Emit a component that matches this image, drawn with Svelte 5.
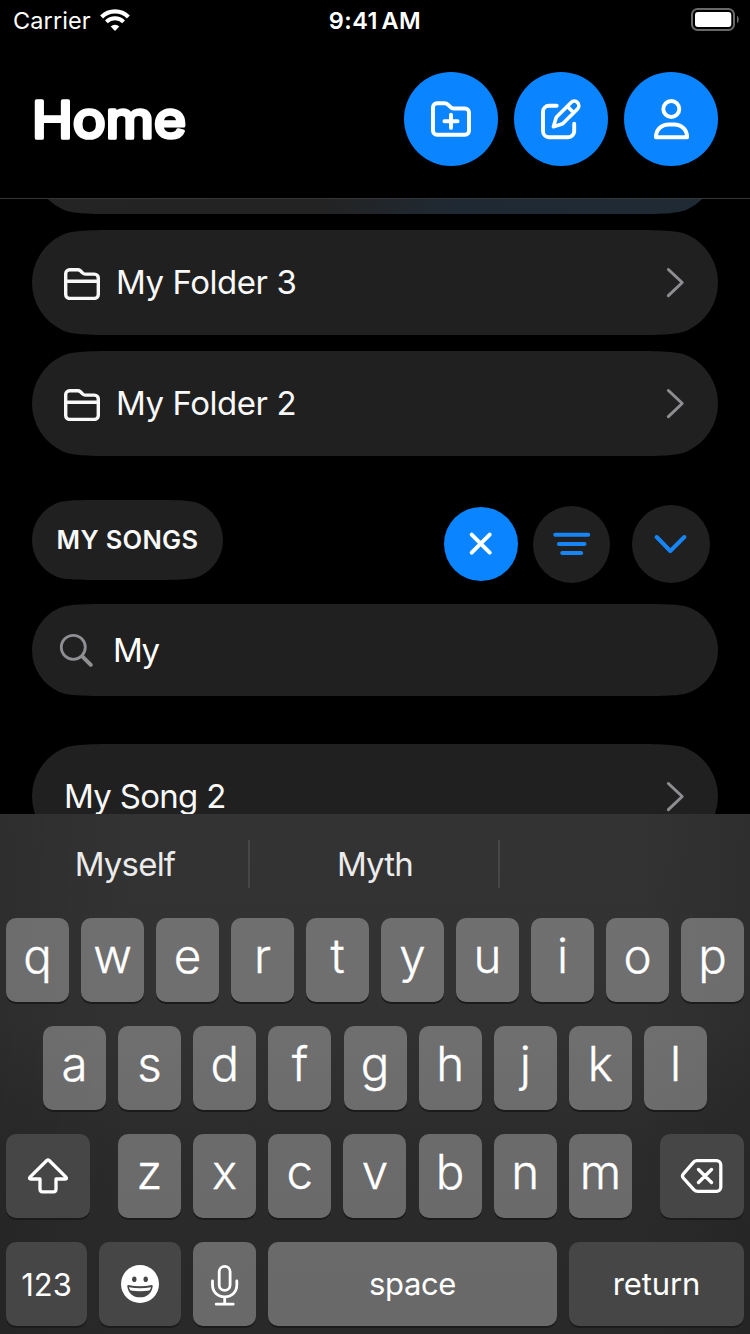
<script>
  const folders = ['My Folder 3', 'My Folder 2'];
  const rowOne = [...'qwertyuiop'];
  const rowTwo = [...'asdfghjkl'];
  const rowThree = [...'zxcvbnm'];

  // Pill outline with continuous corners that ease into the straight edges.
  function pill(w, h) {
    const r = h / 2;
    const k = r / 52.5;
    const x = (v) => +(v * k).toFixed(2);
    const mx = (v) => +(w - v * k).toFixed(2);
    const my = (v) => +(h - v * k).toFixed(2);
    return (
      `path("M0 ${r} A${r} ${r} 0 0 1 ${x(30)} ${x(5.1)} C${x(37)} ${x(1.6)} ${x(48)} 0 ${x(80)} 0 ` +
      `H${mx(80)} C${mx(48)} 0 ${mx(37)} ${x(1.6)} ${mx(30)} ${x(5.1)} A${r} ${r} 0 0 1 ${w} ${r} ` +
      `A${r} ${r} 0 0 1 ${mx(30)} ${my(5.1)} C${mx(37)} ${my(1.6)} ${mx(48)} ${h} ${mx(80)} ${h} ` +
      `H${x(80)} C${x(48)} ${h} ${x(37)} ${my(1.6)} ${x(30)} ${my(5.1)} A${r} ${r} 0 0 1 0 ${r} Z")`
    );
  }
</script>

{#snippet chevron()}
  <svg class="chevron" width="20" height="32" viewBox="0 0 20 32"><path d="M2.4 2.500 16.200 15.500 2.400 28.700" /></svg>
{/snippet}

{#snippet key(letter)}
  <div class="key letter"><span>{letter}</span></div>
{/snippet}

<div class="screen">
  <div class="status">
    <div class="carrier">
      <span>Carrier</span>
      <svg width="30" height="23" viewBox="0 0 30 23" fill="none" stroke="#fff">
        <path d="M1.6 7.9a19 19 0 0 1 26.8 0" stroke-width="4.2" />
        <path d="M6.4 12.8a12.2 12.2 0 0 1 17.2 0" stroke-width="4" />
        <path d="M15 22l-4.3-4.4a6.2 6.2 0 0 1 8.6 0z" fill="#fff" stroke="none" />
      </svg>
    </div>
    <div class="time">9:41 AM</div>
    <svg class="battery" width="49" height="24" viewBox="0 0 49 24">
      <rect x="2" y="1" width="42" height="21" rx="5.5" fill="none" stroke="#69696b" stroke-width="2" />
      <rect x="5" y="4" width="36.3" height="15" rx="3" fill="#fff" />
      <path d="M47 7.7c2.3 1 2.3 6.4 0 7.4z" fill="#69696b" />
    </svg>
  </div>

  <header>
    <svg class="title" width="170" height="80" viewBox="0 0 170 80"><text x="0" y="55.800" textLength="154" lengthAdjust="spacingAndGlyphs">Home</text></svg>
    <div class="actions">
      <div class="round">
        <svg viewBox="0 0 94 94">
          <path d="M29 35.2a4 4 0 0 1 4-4h7.5q2 0 3.4 1.4l2.7 2.6q1.3 1.3 3 1.3H61a4 4 0 0 1 4 4v18.3a4 4 0 0 1-4 4H33a4 4 0 0 1-4-4zM47 42.7v13.2M40.4 49.3h13.2" />
        </svg>
      </div>
      <div class="round">
        <svg viewBox="0 0 94 94">
          <path d="M42.7 33.8H35a6 6 0 0 0-6 6v19.4a6 6 0 0 0 6 6h19.2a6 6 0 0 0 6-6v-7.4" />
          <path d="M57.1 30.500a4.500 4.500 0 0 1 6.400 6.400L48.700 51.700l-9.300 3L42.300 45.300zM53.300 34.300l6.400 6.400" stroke-width="3.600" />
        </svg>
      </div>
      <div class="round">
        <svg viewBox="0 0 94 94">
          <circle cx="47.3" cy="37" r="8" />
          <path d="M31.900 65.200C31.900 57.500 37.500 52.500 45 52.500h5C57.500 52.500 63.100 57.500 63.100 65.200z" />
        </svg>
      </div>
    </div>
  </header>

  <main>
    <div class="row tinted" style:clip-path={pill(686, 105)}></div>
    {#each folders as name}
      <div class="row" style:clip-path={pill(686, 105)}>
        <svg class="folder" width="36" height="32" viewBox="0 0 36 32">
          <path d="M1.7 5.7a4 4 0 0 1 4-4h8q1.6 0 2.7 1l2.4 2.4q1 1 2.6 1h8.9a4 4 0 0 1 4 4v16.3a4 4 0 0 1-4 4H5.7a4 4 0 0 1-4-4zM1.7 13.3h32.6" />
        </svg>
        <span class="name">{name}</span>
        {@render chevron()}
      </div>
    {/each}

    <div class="section">
      <div class="tag" style:clip-path={pill(191, 80)}><span>MY SONGS</span></div>
      <div class="tools">
        <div class="tool close">
          <svg width="26" height="26" viewBox="0 0 26 26"><path d="M3.700 3.700l18 18M21.700 3.700L3.700 21.700" /></svg>
        </div>
        <div class="tool filter">
          <svg width="38" height="24" viewBox="0 0 38 24"><path d="M2.200 2.700h33M5.900 11.900h25.600M9.200 20.900h19" /></svg>
        </div>
        <div class="tool expand">
          <svg width="34" height="22" viewBox="0 0 34 22"><path d="M2.700 4 16.300 18 30.300 4" /></svg>
        </div>
      </div>
    </div>

    <div class="search" style:clip-path={pill(686, 92)}>
      <svg width="36" height="36" viewBox="0 0 36 36">
        <circle cx="14.300" cy="14.300" r="12" stroke-width="2.800" />
        <path d="M23.300 23.300l8.500 8.600" stroke-width="4" />
      </svg>
      <span>My</span>
    </div>

    <div class="row song" style:clip-path={pill(686, 105)}>
      <span class="name">My Song 2</span>
      {@render chevron()}
    </div>
  </main>

  <div class="keyboard">
    <div class="suggestions">
      <div><span>Myself</span></div>
      <div><span>Myth</span></div>
      <div></div>
    </div>
    <div class="keys">
      <div class="line">{#each rowOne as l}{@render key(l)}{/each}</div>
      <div class="line second">{#each rowTwo as l}{@render key(l)}{/each}</div>
      <div class="line">
        <div class="key dark wide">
          <svg width="44" height="38" viewBox="0 0 44 38">
            <path d="M20.800 3.500Q22 2.400 23.200 3.500L40 20.200q1.300 1.800-.8 1.800H30V32q0 2.800-2.500 2.800h-11q-2.500 0-2.500-2.800V22H4.800q-2.100 0-.8-1.800z" />
          </svg>
        </div>
        <div class="letters">{#each rowThree as l}{@render key(l)}{/each}</div>
        <div class="key dark wide">
          <svg width="44" height="36" viewBox="0 0 44 36">
            <path d="M16.500 2.700H36.500a4.300 4.300 0 0 1 4.300 4.300V29a4.300 4.300 0 0 1-4.300 4.300H18q-2.500 0-4.200-1.700L3.300 20q-1.700-2 0-4L13.400 4.400q1.500-1.700 3.500-1.700zM18.500 11.500l13 13M31.500 11.500l-13 13" />
          </svg>
        </div>
      </div>
      <div class="line fourth">
        <div class="key dark numbers"><span>123</span></div>
        <div class="key dark emoji">
          <svg width="40" height="40" viewBox="0 0 40 40">
            <circle cx="20" cy="20" r="19" fill="#fff" />
            <g fill="#464646">
              <ellipse cx="14.300" cy="15.300" rx="2.200" ry="2.800" />
              <ellipse cx="25.700" cy="15.300" rx="2.200" ry="2.800" />
              <path d="M8.200 21q11.800 2.600 23.600 0 1.100 0 .9 1.400C31.500 29.500 27 33.300 20 33.300S8.500 29.500 7.300 22.400q-.2-1.400.9-1.400z" />
            </g>
            <path d="M9 23.200q11 2.300 22 0-.4 2.500-1.700 3.300-9.300 1.400-18.600 0Q9.400 25.700 9 23.200z" fill="#fff" />
          </svg>
        </div>
        <div class="key mic">
          <svg width="30" height="42" viewBox="0 0 30 42">
            <rect x="9.200" y="2.400" width="10.900" height="24" rx="5.450" />
            <path d="M2.500 17v3.800c0 7.200 5 12 12.200 12s12.100-4.800 12.100-12V17M14.700 33v7M6.200 40.200h17" />
          </svg>
        </div>
        <div class="key space"><span>space</span></div>
        <div class="key dark return"><span>return</span></div>
      </div>
    </div>
  </div>
</div>

<style>
  :global(body) { background: #000; }
  .screen {
    width: 750px;
    height: 1334px;
    display: flex;
    flex-direction: column;
    overflow: hidden;
    background: #000;
    color: #fff;
    font-family: Inter, "Liberation Sans", sans-serif;
  }
  svg { display: block; flex: none; }
  span { white-space: nowrap; }

  .status {
    flex: none;
    height: 40px;
    display: grid;
    grid-template-columns: 1fr auto 1fr;
    align-items: center;
    padding: 0 11px 0 13px;
  }
  .carrier { display: flex; align-items: center; gap: 9px; font-size: 23.500px; letter-spacing: 0.100px; }
  .carrier span, .time { padding-top: 1px; }
  .time { font-size: 23.500px; font-weight: 600; letter-spacing: 0.400px; word-spacing: -2.500px; position: relative; left: -1px; }
  .battery { justify-self: end; }

  header {
    flex: none;
    box-sizing: border-box;
    height: 159px;
    padding: 32px 32px 0;
    display: flex;
    justify-content: space-between;
    align-items: flex-start;
    border-bottom: 1px solid #363638;
  }
  .title { margin-top: 10px; }
  .title text {
    font-size: 50.500px;
    font-weight: 400;
    fill: #fff;
    stroke: #fff;
    stroke-width: 3.700px;
    stroke-linejoin: round;
  }
  .actions { display: flex; gap: 16px; }
  .round { width: 94px; height: 94px; border-radius: 50%; background: #0a84ff; }
  .round svg { fill: none; stroke: #fff; stroke-width: 3.900; stroke-linecap: round; stroke-linejoin: round; }

  main { flex: none; height: 615px; overflow: hidden; padding: 0 32px; }
  .row {
    box-sizing: border-box;
    height: 105px;
    margin-bottom: 16px;
    padding: 0 32px;
    display: flex;
    align-items: center;
    background: #202020;
  }
  .tinted { margin-top: -90px; background: linear-gradient(90deg, #242424 0%, #232323 42%, #1f2933 62%, #1f2a35 100%); }
  .folder { margin-right: 16px; margin-top: 2px; fill: none; stroke: #f8f8f8; stroke-width: 3.400; stroke-linejoin: round; }
  .name { font-size: 33px; line-height: 40px; padding-bottom: 2px; color: #f8f8f8; letter-spacing: -0.450px; }
  .song .name { letter-spacing: -0.700px; }
  .chevron { margin-left: auto; fill: none; stroke: #8e8e92; stroke-width: 3; stroke-linecap: round; stroke-linejoin: round; }

  .section { display: flex; justify-content: space-between; margin-top: 44px; height: 104px; padding-right: 8px; }
  .tag {
    width: 191px;
    height: 80px;
    display: flex;
    align-items: center;
    justify-content: center;
    background: #202020;
    color: #f8f8f8;
    font-size: 25.500px;
    font-weight: 600;
    letter-spacing: 0.300px;
  }
  .tag span { padding-bottom: 1px; }
  .tools { display: flex; align-items: center; height: 88px; }
  .tool { border-radius: 50%; background: #202020; display: flex; align-items: center; justify-content: center; }
  .tool svg { fill: none; stroke: #1785f6; stroke-width: 4; stroke-linecap: round; stroke-linejoin: round; }
  .close { width: 74px; height: 74px; background: #0a84ff; margin-right: 15px; }
  .tool.close svg { stroke: #fff; }
  .filter { width: 77px; height: 77px; margin-right: 22px; }
  .expand { width: 78px; height: 78px; }

  .search {
    box-sizing: border-box;
    height: 92px;
    margin-bottom: 48px;
    padding: 0 27px;
    display: flex;
    align-items: center;
    gap: 18px;
    background: #202020;
    font-size: 33px;
    letter-spacing: -1.500px;
  }
  .search svg { fill: none; stroke: #8e8e93; stroke-linecap: round; margin-top: 2px; }

  .keyboard {
    flex: none;
    height: 520px;
    background:
      linear-gradient(90deg, rgba(0, 0, 0, 0.1), transparent 18%, transparent 85%, rgba(0, 0, 0, 0.1)),
      linear-gradient(#333, #323232 40%, #2b2b2b 65%, #292929);
  }
  .suggestions { display: grid; grid-template-columns: repeat(3, 1fr); height: 104px; padding-top: 26px; box-sizing: border-box; }
  .suggestions div {
    box-sizing: border-box;
    height: 48px;
    display: flex;
    align-items: center;
    justify-content: center;
    border-right: 2px solid #474747;
    font-size: 33px;
    letter-spacing: -0.800px;
    color: #ebebeb;
  }
  .suggestions div:last-child { border: 0; }
  .suggestions span { padding-left: 2px; }

  .keys { display: flex; flex-direction: column; gap: 24px; padding: 0 6px; }
  .line { display: flex; justify-content: space-between; height: 84px; }
  .second { padding: 0 37px; }
  .letters { display: flex; justify-content: space-between; width: 514px; }
  .fourth { gap: 12px; justify-content: flex-start; }
  .key {
    flex: none;
    width: 63px;
    height: 84px;
    border-radius: 10px;
    display: flex;
    align-items: center;
    justify-content: center;
    background: rgba(255, 255, 255, 0.300);
    box-shadow: 0 2px 0 #1b1b1b;
    font-size: 31px;
  }
  .key svg { fill: none; stroke: #fff; stroke-width: 3.300; stroke-linecap: round; stroke-linejoin: round; }
  .letter { font-size: 47.500px; font-weight: 300; -webkit-text-stroke: 0.350px #fff; }
  .letter span { margin-top: -8px; line-height: 60px; }
  .dark { background: #464646; }
  .wide { width: 84px; }
  .numbers { width: 81px; }
  .emoji { width: 82px; }
  .key.mic svg { stroke-width: 2.800; margin-top: 2px; }
  .key.emoji svg { stroke: none; }
  .space { width: 289px; letter-spacing: -0.400px; }
  .space span { padding-bottom: 2px; }
  .return { width: 175px; }
  .return span { padding-bottom: 1px; letter-spacing: -0.100px; }
</style>
